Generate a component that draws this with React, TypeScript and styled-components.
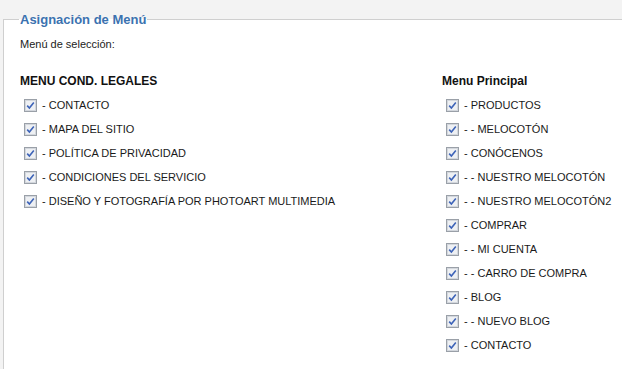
import styled, { createGlobalStyle } from 'styled-components';

/* ─── Data ─────────────────────────────────────── */

const LEGAL_ITEMS = [
  '- CONTACTO',
  '- MAPA DEL SITIO',
  '- POLÍTICA DE PRIVACIDAD',
  '- CONDICIONES DEL SERVICIO',
  '- DISEÑO Y FOTOGRAFÍA POR PHOTOART MULTIMEDIA',
];

const MAIN_ITEMS = [
  '- PRODUCTOS',
  '- - MELOCOTÓN',
  '- CONÓCENOS',
  '- - NUESTRO MELOCOTÓN',
  '- - NUESTRO MELOCOTÓN2',
  '- COMPRAR',
  '- - MI CUENTA',
  '- - CARRO DE COMPRA',
  '- BLOG',
  '- - NUEVO BLOG',
  '- CONTACTO',
];

/* ─── Styles ──────────────────────────────────── */

const GlobalStyle = createGlobalStyle`
  html, body {
    margin: 0;
    padding: 0;
    background: #f3f3f3;
    overflow: hidden;
    font-family: "Liberation Sans", Arial, sans-serif;
    color: #222;
  }
`;

const Page = styled.div`
  display: flex;
  flex-direction: column;
  height: 369px;
  padding: 12px 0 0 3px;
  box-sizing: border-box;
`;

const Fieldset = styled.fieldset`
  flex: 1;
  min-height: 0;
  margin: 0;
  box-sizing: border-box;
  border: 1px solid #cfcfcf;
  border-right: none;
  border-bottom: none;
  background: #fff;
  padding: 0 0 0 16px;
`;

const Legend = styled.legend`
  padding: 0 1px;
  margin-left: -1px;
  font-size: 13px;
  font-weight: bold;
  color: #3b72b0;
`;

const Intro = styled.div`
  font-size: 11px;
  margin-top: 11px;
`;

const Columns = styled.div`
  display: grid;
  grid-template-columns: 422px auto;
  margin-top: 24px;
`;

const ColumnTitle = styled.div`
  font-size: 12px;
  font-weight: bold;
  color: #111;
  height: 14px;
  line-height: 14px;
  margin-bottom: 5px;
`;

const Row = styled.label`
  display: flex;
  align-items: center;
  gap: 5px;
  height: 24px;
  padding-left: 4px;
  font-size: 11px;
  color: #1a1a1a;
`;

/* ─── Parts ───────────────────────────────────── */

function CheckBox() {
  return (
    <svg width="13" height="13" viewBox="0 0 13 13">
      <rect x="0.5" y="0.5" width="12" height="12" fill="#e4e6ea" stroke="#9aa0a8" />
      <rect x="1.5" y="1.5" width="10" height="10" fill="#eef0f3" stroke="#d3d7dd" />
      <path d="M3.2 6.6 L5.4 9 L9.8 3.6" fill="none" stroke="#3d63b8" strokeWidth="1.6" />
    </svg>
  );
}

function Column({ title, items }: { title: string; items: string[] }) {
  return (
    <div>
      <ColumnTitle>{title}</ColumnTitle>
      {items.map((item, i) => (
        <Row key={i}>
          <CheckBox />
          {item}
        </Row>
      ))}
    </div>
  );
}

export default function App() {
  return (
    <>
      <GlobalStyle />
      <Page>
        <Fieldset>
          <Legend>Asignación de Menú</Legend>
          <Intro>Menú de selección:</Intro>
          <Columns>
            <Column title="MENU COND. LEGALES" items={LEGAL_ITEMS} />
            <Column title="Menu Principal" items={MAIN_ITEMS} />
          </Columns>
        </Fieldset>
      </Page>
    </>
  );
}
